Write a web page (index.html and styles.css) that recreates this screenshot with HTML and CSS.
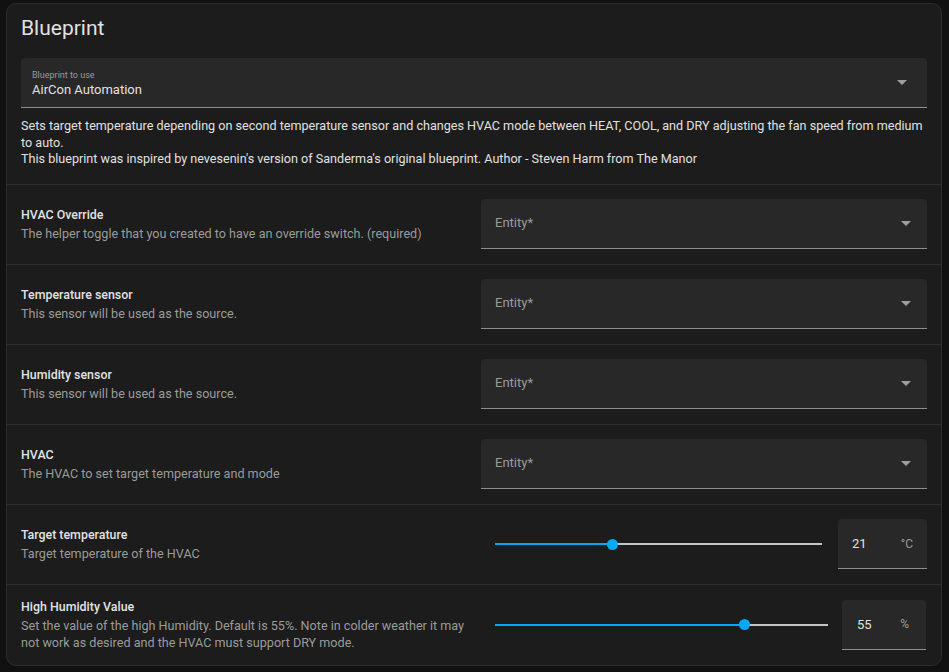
FILE: index.html
```html
<!DOCTYPE html>
<html>
<head>
<meta charset="utf-8">
<link rel="stylesheet" href="styles.css">
</head>
<body>
<div class="card">
  <div class="card-header">Blueprint</div>
  <div class="select">
    <div class="select-text">
      <div class="select-label">Blueprint to use</div>
      <div class="select-value">AirCon Automation</div>
    </div>
    <svg class="arrow" width="10" height="5" viewBox="0 0 10 5"><path d="M0 0h10L5 5z" fill="#9e9e9e"/></svg>
  </div>
  <div class="description">Sets target temperature depending on second temperature sensor and changes HVAC mode between HEAT, COOL, and DRY adjusting the fan speed from medium to auto.<br>This blueprint was inspired by nevesenin's version of Sanderma's original blueprint. Author - Steven Harm from The Manor</div>

  <div class="row">
    <div class="info">
      <div class="name">HVAC Override</div>
      <div class="desc">The helper toggle that you created to have an override switch. (required)</div>
    </div>
    <div class="field">
      <span class="field-label">Entity*</span>
      <svg class="arrow" width="10" height="5" viewBox="0 0 10 5"><path d="M0 0h10L5 5z" fill="#9e9e9e"/></svg>
    </div>
  </div>

  <div class="row">
    <div class="info">
      <div class="name">Temperature sensor</div>
      <div class="desc">This sensor will be used as the source.</div>
    </div>
    <div class="field">
      <span class="field-label">Entity*</span>
      <svg class="arrow" width="10" height="5" viewBox="0 0 10 5"><path d="M0 0h10L5 5z" fill="#9e9e9e"/></svg>
    </div>
  </div>

  <div class="row">
    <div class="info">
      <div class="name">Humidity sensor</div>
      <div class="desc">This sensor will be used as the source.</div>
    </div>
    <div class="field">
      <span class="field-label">Entity*</span>
      <svg class="arrow" width="10" height="5" viewBox="0 0 10 5"><path d="M0 0h10L5 5z" fill="#9e9e9e"/></svg>
    </div>
  </div>

  <div class="row">
    <div class="info">
      <div class="name">HVAC</div>
      <div class="desc">The HVAC to set target temperature and mode</div>
    </div>
    <div class="field">
      <span class="field-label">Entity*</span>
      <svg class="arrow" width="10" height="5" viewBox="0 0 10 5"><path d="M0 0h10L5 5z" fill="#9e9e9e"/></svg>
    </div>
  </div>

  <div class="row">
    <div class="info">
      <div class="name">Target temperature</div>
      <div class="desc">Target temperature of the HVAC</div>
    </div>
    <div class="slider-wrap">
      <div class="slider">
        <div class="track"></div>
        <div class="fill" style="width: 35.8%"><span class="thumb"></span></div>
      </div>
      <div class="number num-temp">
        <span class="num-value">21</span>
        <span class="num-unit">°C</span>
      </div>
    </div>
  </div>

  <div class="row last">
    <div class="info">
      <div class="name">High Humidity Value</div>
      <div class="desc">Set the value of the high Humidity. Default is 55%. Note in colder weather it may not work as desired and the HVAC must support DRY mode.</div>
    </div>
    <div class="slider-wrap">
      <div class="slider slider-hum">
        <div class="track"></div>
        <div class="fill" style="width: 75%"><span class="thumb"></span></div>
      </div>
      <div class="number num-hum">
        <span class="num-value">55</span>
        <span class="num-unit">%</span>
      </div>
    </div>
  </div>
</div>
</body>
</html>
```

FILE: styles.css
```css
* { box-sizing: border-box; }

body {
  margin: 0;
  background: #111111;
  font-family: Roboto, "Noto Sans", sans-serif;
  color: #e1e1e1;
}

.card {
  margin: 3px 0 0 6px;
  width: 936px;
  height: 663px;
  background: #1c1c1c;
  border: 1px solid #2c2c2c;
  border-radius: 10px;
  overflow: hidden;
}

.card-header {
  padding: 10px 14px 0;
  font-size: 21px;
  line-height: 28px;
  font-weight: 400;
  color: #e1e1e1;
}

.select {
  margin: 16px 14px 0;
  height: 50px;
  background: #282828;
  border-radius: 4px 4px 0 0;
  border-bottom: 1px solid #8f8f8f;
  display: flex;
  align-items: center;
  padding: 0 20px 0 11px;
}

.select-text { flex: 1; padding-top: 2px; }

.select-label {
  font-size: 9px;
  line-height: 12px;
  color: #9b9b9b;
}

.select-value {
  font-size: 13px;
  line-height: 17px;
  color: #e1e1e1;
}

.arrow { display: block; flex: none; }

.description {
  padding: 10px 14px 16px;
  font-size: 12.6px;
  line-height: 16.6px;
  color: #e1e1e1;
  border-bottom: 1px solid #2e2e2e;
}

.row {
  display: grid;
  grid-template-columns: 450px 1fr;
  column-gap: 10px;
  align-items: center;
  height: 80px;
  padding: 0 14px;
  border-bottom: 1px solid #2e2e2e;
}

.row.last { border-bottom: none; }

.name {
  font-family: "Roboto Medium", Roboto, sans-serif;
  font-size: 12.4px;
  line-height: 17.5px;
  font-weight: 500;
  color: #e1e1e1;
  margin-bottom: 1.5px;
}

.desc {
  font-size: 12.6px;
  line-height: 17.5px;
  color: #9b9b9b;
}

.field {
  height: 50px;
  background: #282828;
  border-radius: 4px 4px 0 0;
  border-bottom: 1px solid #8f8f8f;
  display: flex;
  align-items: center;
  justify-content: space-between;
  padding: 0 16px 0 14px;
}

.field-label {
  font-size: 13px;
  color: #9b9b9b;
  margin-top: -2px;
}

.slider-wrap {
  display: flex;
  align-items: center;
}

.slider {
  flex: 1;
  position: relative;
  height: 12px;
  margin: 0 16px 0 14px;
}

.slider-hum { margin-right: 14px; }

.track {
  position: absolute;
  left: 0;
  right: 0;
  top: 5px;
  height: 2px;
  background: #c4c4c4;
}

.fill {
  position: absolute;
  left: 0;
  top: 5px;
  height: 2px;
  background: #03a9f4;
}

.thumb {
  position: absolute;
  right: -5.5px;
  top: -4.5px;
  width: 11px;
  height: 11px;
  border-radius: 50%;
  background: #03a9f4;
}

.number {
  height: 50px;
  background: #282828;
  border-radius: 4px 4px 0 0;
  border-bottom: 1px solid #8f8f8f;
  display: flex;
  align-items: center;
  justify-content: space-between;
  padding: 0 14px 0 14px;
}

.num-temp { width: 89px; }
.num-hum { width: 84px; margin-right: 1px; padding-left: 15px; padding-right: 17px; }

.num-value {
  font-size: 13px;
  color: #e1e1e1;
}

.num-unit {
  font-size: 12px;
  color: #9b9b9b;
}
```
